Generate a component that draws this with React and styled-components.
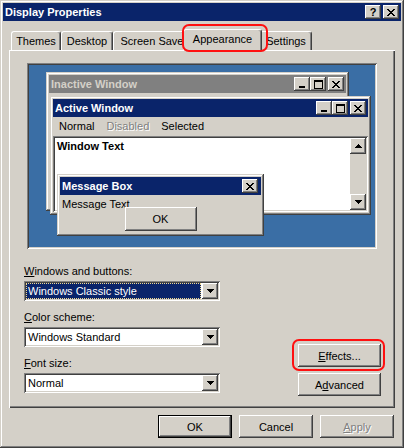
import React from 'react';
import styled, { createGlobalStyle, css } from 'styled-components';

const Global = createGlobalStyle`
  html, body { margin: 0; padding: 0; background: #d4d0c8; }
  body { font-family: "Liberation Sans", Arial, sans-serif; font-size: 11px; color: #000; }
  * { box-sizing: border-box; }
`;

const raised = css`
  box-shadow: inset -1px -1px #404040, inset 1px 1px #ffffff, inset -2px -2px #808080, inset 2px 2px #d4d0c8;
`;
const raisedWin = css`
  box-shadow: inset -1px -1px #404040, inset 1px 1px #d4d0c8, inset -2px -2px #808080, inset 2px 2px #ffffff;
`;
const sunken = css`
  box-shadow: inset 1px 1px #808080, inset -1px -1px #ffffff, inset 2px 2px #404040, inset -2px -2px #d4d0c8;
`;

const Window = styled.div`
  width: 404px;
  height: 448px;
  padding: 3px;
  background: #d4d0c8;
  ${raisedWin}
  display: flex;
  flex-direction: column;
`;

const TitleBar = styled.div`
  height: 18px;
  flex-shrink: 0;
  background: ${p => p.$bg || '#0a246a'};
  display: flex;
  align-items: center;
  padding: 0 ${p => p.$pr ?? 2}px 0 2px;
`;

const TitleText = styled.div`
  flex: 1;
  color: ${p => p.$color || '#fff'};
  font-weight: bold;
  font-size: 11px;
  line-height: 13px;
  white-space: nowrap;
  overflow: hidden;
`;

const CaptionGroup = styled.div`
  display: flex;
  margin-left: ${p => p.$ml || 0}px;
`;

const CaptionButton = styled.div`
  width: 16px;
  height: 14px;
  background: #d4d0c8;
  ${raised}
  display: flex;
  align-items: center;
  justify-content: center;
  font-weight: bold;
  font-size: 11px;
  line-height: 11px;
  color: #000;
`;

const Body = styled.div`
  flex: 1;
  display: flex;
  flex-direction: column;
  padding: 0 6px;
`;

const TabRow = styled.div`
  height: 29px;
  display: flex;
  align-items: flex-end;
  padding-left: 2px;
`;

const Tab = styled.div`
  position: relative;
  width: ${p => p.$w}px;
  height: ${p => (p.$active ? 22 : 19)}px;
  margin: ${p => (p.$active ? '0 -2px -1px -2px' : '0')};
  z-index: ${p => (p.$active ? 1 : 'auto')};
  padding-bottom: ${p => (p.$active ? 3 : 0)}px;
  background: #d4d0c8;
  border-top: 1px solid #fff;
  border-left: 1px solid #fff;
  border-right: 1px solid #404040;
  border-radius: 3px 3px 0 0;
  box-shadow: inset -1px 0 #808080;
  display: flex;
  align-items: center;
  justify-content: center;
  white-space: nowrap;
  line-height: 13px;
`;

const TabClip = styled.span`
  display: block;
  overflow: hidden;
  max-width: ${p => p.$max}px;
  margin-left: ${p => p.$ml || 0}px;
`;

const RedMark = styled.div`
  position: absolute;
  left: ${p => p.$x}px;
  top: ${p => p.$y}px;
  width: ${p => p.$w}px;
  height: ${p => p.$h}px;
  border: 2px solid #ff1010;
  border-radius: 7px;
  z-index: 3;
  pointer-events: none;
`;

const Panel = styled.div`
  height: 358px;
  flex-shrink: 0;
  background: #d4d0c8;
  box-shadow: inset 1px 1px #ffffff, inset -1px -1px #404040, inset -2px -2px #808080;
  padding: 13px 14px 12px 15px;
  display: flex;
  flex-direction: column;
`;

const Preview = styled.div`
  width: 350px;
  height: 186px;
  margin-left: 3px;
  padding: 2px;
  ${sunken}
`;

const Desktop = styled.div`
  position: relative;
  width: 100%;
  height: 100%;
  background: #3a6ea5;
`;

const MiniWin = styled.div`
  position: absolute;
  left: ${p => p.$x}px;
  top: ${p => p.$y}px;
  width: ${p => p.$w}px;
  height: ${p => p.$h}px;
  background: #d4d0c8;
  padding: 3px;
  ${raisedWin}
  display: flex;
  flex-direction: column;
`;

const MenuBar = styled.div`
  height: 19px;
  display: flex;
  align-items: center;
  line-height: 13px;
`;

const MenuItem = styled.span`
  padding: 0 6px;
  color: ${p => (p.$disabled ? '#808080' : '#000')};
  text-shadow: ${p => (p.$disabled ? '1px 1px #fff' : 'none')};
`;

const TextArea = styled.div`
  flex: 1;
  background: #fff;
  padding: 2px;
  ${sunken}
  display: flex;
`;

const WinText = styled.div`
  flex: 1;
  padding: 2px 0 0 2px;
  font-weight: bold;
  line-height: 13px;
`;

const ScrollBar = styled.div`
  width: 16px;
  display: flex;
  flex-direction: column;
  justify-content: space-between;
  background: #d4d0c8;
`;

const ArrowButton = styled.div`
  width: 16px;
  height: 16px;
  background: #d4d0c8;
  ${raised}
  display: flex;
  align-items: center;
  justify-content: center;
`;

const MsgBody = styled.div`
  flex: 1;
  display: flex;
  flex-direction: column;
`;

const MsgText = styled.div`
  padding: 3px 0 0 2px;
  line-height: 13px;
  white-space: nowrap;
`;

const Btn = styled.button`
  width: ${p => p.$w}px;
  height: ${p => p.$h || 23}px;
  padding: 0;
  margin: 0;
  font-family: "Liberation Sans", Arial, sans-serif;
  font-size: 11px;
  color: ${p => (p.$disabled ? '#808080' : '#000')};
  text-shadow: ${p => (p.$disabled ? '1px 1px #fff' : 'none')};
  background: #d4d0c8;
  border: ${p => (p.$default ? '1px solid #000' : 'none')};
  ${raised}
  display: flex;
  align-items: center;
  justify-content: center;
  flex-shrink: 0;
  cursor: default;
`;

const MsgOk = styled(Btn)`
  align-self: center;
  margin-top: -4px;
`;

const Lower = styled.div`
  margin-top: 16px;
  height: 131px;
  display: flex;
  justify-content: space-between;
`;

const Fields = styled.div`
  width: 196px;
  display: flex;
  flex-direction: column;
  gap: 10px;
`;

const Field = styled.div`
  display: flex;
  flex-direction: column;
  gap: 3px;
`;

const Label = styled.div`
  line-height: 13px;
  white-space: nowrap;
`;

const Combo = styled.div`
  height: 20px;
  background: #fff;
  padding: 2px;
  ${sunken}
  display: flex;
`;

const ComboValue = styled.div`
  flex: 1;
  margin-right: 1px;
  padding-left: 2px;
  line-height: 16px;
  white-space: nowrap;
  color: ${p => (p.$selected ? '#fff' : '#000')};
  background: ${p => (p.$selected ? '#0a246a' : 'transparent')};
  outline: ${p => (p.$selected ? '1px dotted #f0d890' : 'none')};
  outline-offset: -1px;
`;

const SideButtons = styled.div`
  display: flex;
  flex-direction: column;
  justify-content: flex-end;
  gap: 6px;
`;

const Marked = styled.div`
  position: relative;
`;

const Actions = styled.div`
  display: flex;
  justify-content: flex-end;
  gap: 7px;
  padding: 7px 1px 0 0;
`;

const Acc = styled.span`
  text-decoration: underline;
`;

const X_PATTERN = [
  '11000011',
  '01100110',
  '00111100',
  '00011000',
  '00111100',
  '01100110',
  '11000011',
];

function CloseGlyph() {
  const rects = [];
  X_PATTERN.forEach((row, y) =>
    row.split('').forEach((c, x) => {
      if (c === '1') rects.push(<rect key={`${x}-${y}`} x={x} y={y} width="1" height="1" />);
    })
  );
  return (
    <svg width="8" height="7" viewBox="0 0 8 7" shapeRendering="crispEdges" fill="#000">
      {rects}
    </svg>
  );
}

function MinGlyph() {
  return (
    <svg width="8" height="9" viewBox="0 0 8 9" shapeRendering="crispEdges" fill="#000">
      <rect x="1" y="6" width="6" height="2" />
    </svg>
  );
}

function MaxGlyph() {
  return (
    <svg width="9" height="9" viewBox="0 0 9 9" shapeRendering="crispEdges" fill="none" stroke="#000">
      <rect x="0.5" y="0.5" width="8" height="8" />
      <line x1="0" y1="1.5" x2="9" y2="1.5" />
    </svg>
  );
}

function Tri({ up }) {
  return (
    <svg width="7" height="4" viewBox="0 0 7 4" shapeRendering="crispEdges" fill="#000">
      {up ? <polygon points="3.5,0 7,4 0,4" /> : <polygon points="0,0 7,0 3.5,4" />}
    </svg>
  );
}

function WinButtons() {
  return (
    <>
      <CaptionGroup>
        <CaptionButton><MinGlyph /></CaptionButton>
        <CaptionButton><MaxGlyph /></CaptionButton>
      </CaptionGroup>
      <CaptionGroup $ml={2}>
        <CaptionButton><CloseGlyph /></CaptionButton>
      </CaptionGroup>
    </>
  );
}

function ComboBox({ value, selected }) {
  return (
    <Combo>
      <ComboValue $selected={selected}>{value}</ComboValue>
      <ArrowButton><Tri /></ArrowButton>
    </Combo>
  );
}

export default function App() {
  return (
    <>
      <Global />
      <Window>
        <TitleBar>
          <TitleText>Display Properties</TitleText>
          <CaptionGroup>
            <CaptionButton>?</CaptionButton>
          </CaptionGroup>
          <CaptionGroup $ml={2}>
            <CaptionButton><CloseGlyph /></CaptionButton>
          </CaptionGroup>
        </TitleBar>
        <Body>
          <TabRow>
            <Tab $w={50}>Themes</Tab>
            <Tab $w={52}>Desktop</Tab>
            <Tab $w={72}>
              <TabClip $max={62} $ml={5}>Screen Saver</TabClip>
            </Tab>
            <Tab $w={79} $active>
              Appearance
              <RedMark $x={-2} $y={-6} $w={86} $h={28} />
            </Tab>
            <Tab $w={52}>Settings</Tab>
          </TabRow>
          <Panel>
            <Preview>
              <Desktop>
                <MiniWin $x={17} $y={7} $w={303} $h={139}>
                  <TitleBar $bg="#808080">
                    <TitleText $color="#d4d0c8">Inactive Window</TitleText>
                    <WinButtons />
                  </TitleBar>
                </MiniWin>
                <MiniWin $x={21} $y={31} $w={321} $h={119}>
                  <TitleBar>
                    <TitleText>Active Window</TitleText>
                    <WinButtons />
                  </TitleBar>
                  <MenuBar>
                    <MenuItem>Normal</MenuItem>
                    <MenuItem $disabled>Disabled</MenuItem>
                    <MenuItem>Selected</MenuItem>
                  </MenuBar>
                  <TextArea>
                    <WinText>Window Text</WinText>
                    <ScrollBar>
                      <ArrowButton><Tri up /></ArrowButton>
                      <ArrowButton><Tri /></ArrowButton>
                    </ScrollBar>
                  </TextArea>
                </MiniWin>
                <MiniWin $x={28} $y={109} $w={207} $h={62}>
                  <TitleBar $pr={3}>
                    <TitleText>Message Box</TitleText>
                    <CaptionButton><CloseGlyph /></CaptionButton>
                  </TitleBar>
                  <MsgBody>
                    <MsgText>Message Text</MsgText>
                    <MsgOk $w={72} $h={24}>OK</MsgOk>
                  </MsgBody>
                </MiniWin>
              </Desktop>
            </Preview>
            <Lower>
              <Fields>
                <Field>
                  <Label><Acc>W</Acc>indows and buttons:</Label>
                  <ComboBox value="Windows Classic style" selected />
                </Field>
                <Field>
                  <Label><Acc>C</Acc>olor scheme:</Label>
                  <ComboBox value="Windows Standard" />
                </Field>
                <Field>
                  <Label><Acc>F</Acc>ont size:</Label>
                  <ComboBox value="Normal" />
                </Field>
              </Fields>
              <SideButtons>
                <Marked>
                  <Btn $w={83}><Acc>E</Acc>ffects...</Btn>
                  <RedMark $x={-6} $y={-5} $w={93} $h={32} />
                </Marked>
                <Btn $w={83}>A<Acc>d</Acc>vanced</Btn>
              </SideButtons>
            </Lower>
          </Panel>
          <Actions>
            <Btn $w={74} $default>OK</Btn>
            <Btn $w={74}>Cancel</Btn>
            <Btn $w={74} $disabled><Acc>A</Acc>pply</Btn>
          </Actions>
        </Body>
      </Window>
    </>
  );
}
